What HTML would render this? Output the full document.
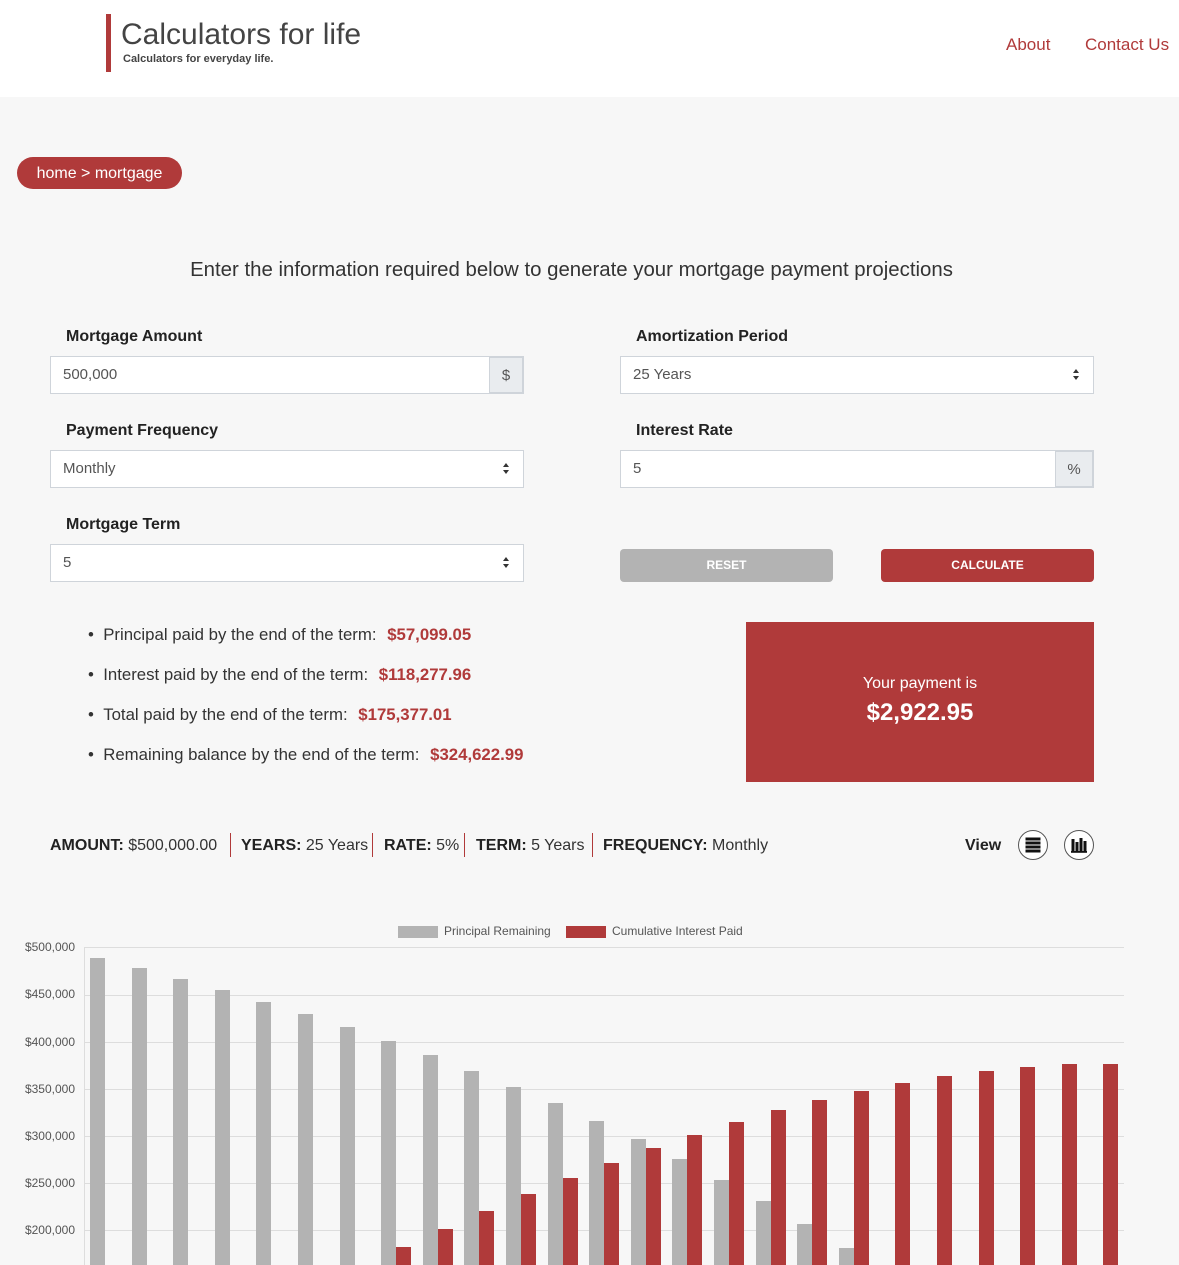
<!DOCTYPE html>
<html><head><meta charset="utf-8"><style>
*{box-sizing:border-box;margin:0;padding:0}
html,body{width:1179px;height:1265px;overflow:hidden;background:#f7f7f7;font-family:"Liberation Sans",sans-serif;color:#333}
#w{position:relative;width:1179px;height:1265px;overflow:hidden}
.a{position:absolute}
.hdr{left:0;top:0;width:1179px;height:97px;background:#fff}
.lbl{font-size:16px;font-weight:bold;color:#222}
.inp{height:38px;background:#fff;border:1px solid #cfd4da;font-size:15px;color:#555;padding:0 12px;line-height:36px}
.add{background:#e9ecef;border-left:1px solid #cfd4da;text-align:center;color:#555}
.arr{position:absolute;right:12px;top:12px;width:0;height:0}
.arr:before{content:"";position:absolute;left:-4px;top:0;border:3.5px solid transparent;border-bottom:4px solid #333;border-top:0}
.arr:after{content:"";position:absolute;left:-4px;top:7px;border:3.5px solid transparent;border-top:4px solid #333;border-bottom:0}
.li{font-size:16.8px;color:#333;left:88px}
.li b{color:#b03a3a;margin-left:6px}
.g,.r{width:15px;bottom:0}
.g{background:#b3b3b3}
.r{background:#b03a3a}
.gl{left:85px;width:1039px;height:1px;background:#ddd}
.yl{width:75px;text-align:right;left:0;font-size:12px;color:#555}
.sum{font-size:16px;color:#333;top:837px}
.sum b{color:#222}
.sep{width:1px;height:24px;background:#b03a3a;top:833px}
</style></head><body><div id="w">
<div class="a hdr"></div>
<div class="a" style="left:106px;top:14px;width:5px;height:58px;background:#b03a3a"></div>
<div class="a" style="left:121px;top:18px;font-size:30px;color:#444">Calculators for life</div>
<div class="a" style="left:123px;top:53px;font-size:11px;color:#444;font-weight:bold">Calculators for everyday life.</div>
<div class="a" style="left:1006px;top:35px;font-size:17px;color:#b03a3a">About</div>
<div class="a" style="left:1085px;top:35px;font-size:17px;color:#b03a3a">Contact Us</div>

<div class="a" style="left:17px;top:157px;width:165px;height:32px;border-radius:16px;background:#b03a3a;color:#fff;font-size:16px;line-height:33px;text-align:center">home &gt; mortgage</div>

<div class="a" style="left:0;width:1143px;top:259px;text-align:center;font-size:20.4px;color:#333">Enter the information required below to generate your mortgage payment projections</div>

<div class="a lbl" style="left:66px;top:328px">Mortgage Amount</div>
<div class="a inp" style="left:50px;top:356px;width:474px">500,000</div>
<div class="a inp add" style="left:489px;top:357px;width:34px;height:36px;padding:0">$</div>

<div class="a lbl" style="left:636px;top:328px">Amortization Period</div>
<div class="a inp" style="left:620px;top:356px;width:474px">25 Years<span class="arr" style="right:16px"></span></div>

<div class="a lbl" style="left:66px;top:422px">Payment Frequency</div>
<div class="a inp" style="left:50px;top:450px;width:474px">Monthly<span class="arr" style="right:16px"></span></div>

<div class="a lbl" style="left:636px;top:422px">Interest Rate</div>
<div class="a inp" style="left:620px;top:450px;width:474px">5</div>
<div class="a inp add" style="left:1055px;top:451px;width:38px;height:36px;padding:0">%</div>

<div class="a lbl" style="left:66px;top:516px">Mortgage Term</div>
<div class="a inp" style="left:50px;top:544px;width:474px">5<span class="arr" style="right:16px"></span></div>

<div class="a" style="left:620px;top:549px;width:213px;height:33px;border-radius:4px;background:#b3b3b3;color:#fff;font-size:12px;font-weight:bold;text-align:center;line-height:33px">RESET</div>
<div class="a" style="left:881px;top:549px;width:213px;height:33px;border-radius:4px;background:#b03a3a;color:#fff;font-size:12px;font-weight:bold;text-align:center;line-height:33px">CALCULATE</div>

<div class="a li" style="top:625px">•&nbsp;&nbsp;Principal paid by the end of the term: <b>$57,099.05</b></div>
<div class="a li" style="top:665px">•&nbsp;&nbsp;Interest paid by the end of the term: <b>$118,277.96</b></div>
<div class="a li" style="top:705px">•&nbsp;&nbsp;Total paid by the end of the term: <b>$175,377.01</b></div>
<div class="a li" style="top:745px">•&nbsp;&nbsp;Remaining balance by the end of the term: <b>$324,622.99</b></div>

<div class="a" style="left:746px;top:622px;width:348px;height:160px;background:#b03a3a;color:#fff;text-align:center">
<div style="margin-top:53px;font-size:16px">Your payment is</div>
<div style="margin-top:6px;font-size:24px;font-weight:bold">$2,922.95</div></div>

<div class="a sum" style="left:50px"><b>AMOUNT:</b> $500,000.00</div>
<div class="a sep" style="left:230px"></div>
<div class="a sum" style="left:241px"><b>YEARS:</b> 25 Years</div>
<div class="a sep" style="left:372px"></div>
<div class="a sum" style="left:384px"><b>RATE:</b> 5%</div>
<div class="a sep" style="left:464px"></div>
<div class="a sum" style="left:476px"><b>TERM:</b> 5 Years</div>
<div class="a sep" style="left:592px"></div>
<div class="a sum" style="left:603px"><b>FREQUENCY:</b> Monthly</div>
<div class="a sum" style="left:965px;font-weight:bold;color:#222">View</div>
<div class="a" style="left:1018px;top:830px;width:30px;height:30px;border:1px solid #555;border-radius:50%;background:#fff">
<svg width="28" height="28" viewBox="0 0 28 28" style="position:absolute;left:0;top:0"><g fill="#111"><rect x="6.5" y="6.5" width="15" height="3"/><rect x="6.5" y="10.5" width="15" height="3"/><rect x="6.5" y="14.5" width="15" height="3"/><rect x="6.5" y="18.5" width="15" height="3"/></g></svg></div>
<div class="a" style="left:1064px;top:830px;width:30px;height:30px;border:1px solid #555;border-radius:50%;background:#fff">
<svg width="28" height="28" viewBox="0 0 28 28" style="position:absolute;left:0;top:0"><g fill="#111"><rect x="6" y="20" width="16" height="1.8"/><rect x="6.5" y="8" width="3" height="12"/><rect x="10.5" y="11" width="3" height="9"/><rect x="14.5" y="7" width="3" height="13"/><rect x="18.5" y="10" width="3" height="10"/></g></svg></div>

<div class="a" style="left:398px;top:926px;width:40px;height:12px;background:#b3b3b3"></div>
<div class="a" style="left:444px;top:924px;font-size:12px;color:#555">Principal Remaining</div>
<div class="a" style="left:566px;top:926px;width:40px;height:12px;background:#b03a3a"></div>
<div class="a" style="left:612px;top:924px;font-size:12px;color:#555">Cumulative Interest Paid</div>

<div class="a gl" style="top:947px"></div><div class="a yl" style="top:940px">$500,000</div>
<div class="a gl" style="top:995px"></div><div class="a yl" style="top:987px">$450,000</div>
<div class="a gl" style="top:1042px"></div><div class="a yl" style="top:1035px">$400,000</div>
<div class="a gl" style="top:1089px"></div><div class="a yl" style="top:1082px">$350,000</div>
<div class="a gl" style="top:1136px"></div><div class="a yl" style="top:1129px">$300,000</div>
<div class="a gl" style="top:1183px"></div><div class="a yl" style="top:1176px">$250,000</div>
<div class="a gl" style="top:1230px"></div><div class="a yl" style="top:1223px">$200,000</div>
<div class="a" style="left:84px;top:947px;width:1px;height:318px;background:#ddd"></div>

<div class="a g" style="left:90px;height:307px"></div>
<div class="a g" style="left:132px;height:297px"></div>
<div class="a g" style="left:173px;height:286px"></div>
<div class="a g" style="left:215px;height:275px"></div>
<div class="a g" style="left:256px;height:263px"></div>
<div class="a g" style="left:298px;height:251px"></div>
<div class="a g" style="left:340px;height:238px"></div>
<div class="a g" style="left:381px;height:224px"></div>
<div class="a g" style="left:423px;height:210px"></div>
<div class="a g" style="left:464px;height:194px"></div>
<div class="a g" style="left:506px;height:178px"></div>
<div class="a g" style="left:548px;height:162px"></div>
<div class="a g" style="left:589px;height:144px"></div>
<div class="a g" style="left:631px;height:126px"></div>
<div class="a g" style="left:672px;height:106px"></div>
<div class="a g" style="left:714px;height:85px"></div>
<div class="a g" style="left:756px;height:64px"></div>
<div class="a g" style="left:797px;height:41px"></div>
<div class="a g" style="left:839px;height:17px"></div>

<div class="a r" style="left:396px;height:18px"></div>
<div class="a r" style="left:438px;height:36px"></div>
<div class="a r" style="left:479px;height:54px"></div>
<div class="a r" style="left:521px;height:71px"></div>
<div class="a r" style="left:563px;height:87px"></div>
<div class="a r" style="left:604px;height:102px"></div>
<div class="a r" style="left:646px;height:117px"></div>
<div class="a r" style="left:687px;height:130px"></div>
<div class="a r" style="left:729px;height:143px"></div>
<div class="a r" style="left:771px;height:155px"></div>
<div class="a r" style="left:812px;height:165px"></div>
<div class="a r" style="left:854px;height:174px"></div>
<div class="a r" style="left:895px;height:182px"></div>
<div class="a r" style="left:937px;height:189px"></div>
<div class="a r" style="left:979px;height:194px"></div>
<div class="a r" style="left:1020px;height:198px"></div>
<div class="a r" style="left:1062px;height:201px"></div>
<div class="a r" style="left:1103px;height:201px"></div>
</div></body></html>
